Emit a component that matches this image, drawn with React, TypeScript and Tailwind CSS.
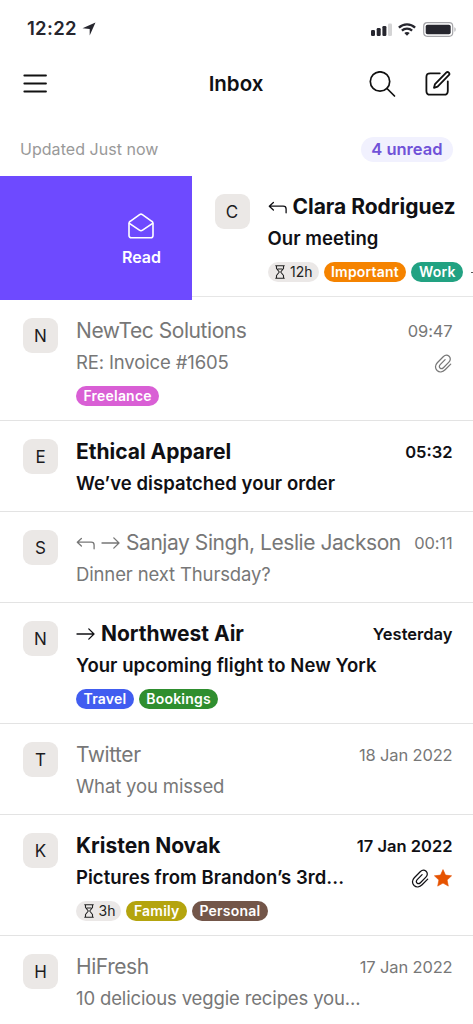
import React from "react";

type Tag = { label: string; color: string };

type Mail = {
  initial: string;
  sender: string;
  subject: string;
  date?: string;
  unread?: boolean;
  replied?: boolean;
  forwarded?: boolean;
  attachment?: boolean;
  starred?: boolean;
  expires?: string;
  tags?: Tag[];
};

const mails: Mail[] = [
  {
    initial: "N",
    sender: "NewTec Solutions",
    subject: "RE: Invoice #1605",
    date: "09:47",
    attachment: true,
    tags: [{ label: "Freelance", color: "bg-[#d95fd5]" }],
  },
  {
    initial: "E",
    sender: "Ethical Apparel",
    subject: "We’ve dispatched your order",
    date: "05:32",
    unread: true,
  },
  {
    initial: "S",
    sender: "Sanjay Singh, Leslie Jackson",
    subject: "Dinner next Thursday?",
    date: "00:11",
    replied: true,
    forwarded: true,
  },
  {
    initial: "N",
    sender: "Northwest Air",
    subject: "Your upcoming flight to New York",
    date: "Yesterday",
    unread: true,
    forwarded: true,
    tags: [
      { label: "Travel", color: "bg-[#415df0]" },
      { label: "Bookings", color: "bg-[#2f8e2f]" },
    ],
  },
  {
    initial: "T",
    sender: "Twitter",
    subject: "What you missed",
    date: "18 Jan 2022",
  },
  {
    initial: "K",
    sender: "Kristen Novak",
    subject: "Pictures from Brandon’s 3rd...",
    date: "17 Jan 2022",
    unread: true,
    attachment: true,
    starred: true,
    expires: "3h",
    tags: [
      { label: "Family", color: "bg-[#b4a40e]" },
      { label: "Personal", color: "bg-[#735649]" },
    ],
  },
  {
    initial: "H",
    sender: "HiFresh",
    subject: "10 delicious veggie recipes you...",
    date: "17 Jan 2022",
  },
];

const swipedMail: Mail = {
  initial: "C",
  sender: "Clara Rodriguez",
  subject: "Our meeting",
  unread: true,
  replied: true,
  expires: "12h",
  tags: [
    { label: "Important", color: "bg-[#f58300]" },
    { label: "Work", color: "bg-[#22a282]" },
  ],
};

function ReplyIcon() {
  return (
    <svg width="19" height="14" viewBox="0 0 19 14" fill="none" stroke="currentColor" strokeWidth="1.3" strokeLinecap="round" strokeLinejoin="round">
      <path d="M5.4 1.4 1.3 5.2l4.1 3.8M1.3 5.2h13.9c1.9 0 2.9 1 2.9 2.8v3.8" />
    </svg>
  );
}

function ForwardIcon() {
  return (
    <svg width="19" height="14" viewBox="0 0 19 14" fill="none" stroke="currentColor" strokeWidth="1.3" strokeLinecap="round" strokeLinejoin="round">
      <path d="M1 6h17M12.8.9 18 6l-5.200 5.100" />
    </svg>
  );
}

function ClipIcon() {
  return (
    <svg width="18" height="19" viewBox="0 0 18 19" fill="none" stroke="currentColor" strokeWidth="1.25" strokeLinecap="round" strokeLinejoin="round">
      <path d="M16.7 10.1l-5.6 5.7c-2.4 2.4-5.7 2.8-8 .7-2.3-2.2-2.1-5.4.2-7.8l5.9-6c1.7-1.7 4.2-2 5.9-.4 1.7 1.6 1.5 4.1-.2 5.8l-5.5 5.6c-1 1-2.4 1.2-3.4.3-.9-1-.8-2.3.2-3.400l4.900-5" />
    </svg>
  );
}

function StarIcon() {
  return (
    <svg width="18" height="18" viewBox="0 0 18 18" fill="#e65300">
      <path d="M9 .6l2.500 5.500 6.100.7-4.500 4.200 1.200 6.100L9 14.100l-5.300 3 1.200-6.100L.4 6.800l6.100-.7z" stroke="#e65300" strokeWidth=".6" strokeLinejoin="round" />
    </svg>
  );
}

function HourglassIcon() {
  return (
    <svg width="10" height="14" viewBox="0 0 10 14" fill="none" stroke="#222" strokeWidth="1.1" strokeLinejoin="round">
      <path d="M.3.8h9.400M.3 13.200h9.400M1.500.8v2.700L4.300 7l-2.800 3.500v2.700M8.500.8v2.700L5.700 7l2.800 3.500v2.700M2.600 4h4.800" />
    </svg>
  );
}

function MailContent({ mail }: { mail: Mail }) {
  const tone = mail.unread ? "text-[#101014]" : "text-[#777]";
  return (
    <>
      <div className="mt-[18px] w-[35px] h-[35px] shrink-0 rounded-[9px] bg-[#ebe8e6] text-[#1c1c1e] text-[17px] leading-[36px] text-center">
        {mail.initial}
      </div>
      <div className={`ml-[18px] mt-[18px] flex-1 min-w-0 whitespace-nowrap ${tone}`}>
        <div className="flex items-center h-[26px]">
          {mail.replied && <span className="mr-[6px] mt-px"><ReplyIcon /></span>}
          {mail.forwarded && <span className="mr-[6px] mt-px"><ForwardIcon /></span>}
          <span
            className={
              mail.unread
                ? "text-[21px] font-bold tracking-[-0.02px]"
                : "text-[21px] tracking-[-0.44px]"
            }
          >
            {mail.sender}
          </span>
          {mail.date && (
            <span
              className={`ml-auto ${
                mail.unread ? "text-[16.5px] font-semibold" : "text-[16.5px] tracking-[-0.15px]"
              }`}
            >
              {mail.date}
            </span>
          )}
        </div>
        <div className="flex items-center h-[26px] mt-[6px]">
          <span
            className={
              mail.unread
                ? "text-[18.5px] font-semibold tracking-[0.05px]"
                : "text-[18.5px] tracking-[-0.14px]"
            }
          >
            {mail.subject}
          </span>
          <span className="ml-auto mr-px flex items-center gap-[5px]">
            {mail.attachment && <ClipIcon />}
            {mail.starred && <StarIcon />}
          </span>
        </div>
        {mail.tags && (
          <div className="flex gap-[5px] mt-[10px] h-5 text-sm leading-5">
            {mail.expires && (
              <span className="rounded-full bg-[#ebe8e7] text-[#222] pl-[7.5px] pr-[6px] flex items-center gap-[5px]">
                <HourglassIcon />
                {mail.expires}
              </span>
            )}
            {mail.tags.map((tag) => (
              <span
                key={tag.label}
                className={`rounded-full px-[7.5px] text-white font-semibold tracking-[0.2px] ${tag.color}`}
              >
                {tag.label}
              </span>
            ))}
          </div>
        )}
      </div>
    </>
  );
}

function MailRow({ mail }: { mail: Mail }) {
  return (
    <div
      className={`flex shrink-0 pl-[23px] pr-[20.5px] border-b border-[#e3e3e3] ${
        mail.tags ? "h-[121px]" : "h-[91px]"
      }`}
    >
      <MailContent mail={mail} />
    </div>
  );
}

function SwipedRow({ mail }: { mail: Mail }) {
  return (
    <div className="flex h-[124px] shrink-0 overflow-hidden">
      <div className="w-[192px] shrink-0 bg-[#6e4aff] text-white flex flex-col items-end pr-[31px]">
        <div className="flex flex-col items-center pt-[37px]">
          <svg width="26" height="26" viewBox="0 0 26 26" fill="none" stroke="white" strokeWidth="1.6" strokeLinejoin="round" strokeLinecap="round">
            <path d="M1 10.400c0-.9.400-1.600 1.200-2.100L11.600 1.600c.9-.6 1.900-.6 2.800 0l9.400 6.700c.8.500 1.200 1.200 1.200 2.100v12c0 1.400-.9 2.300-2.300 2.300H3.300C1.900 24.700 1 23.800 1 22.400z" />
            <path d="M1.400 10.300l10 6.900c1 .7 2.200.7 3.200 0l10-6.900" />
          </svg>
          <span className="mt-[6px] text-base font-semibold leading-6">Read</span>
        </div>
      </div>
      <div className="flex flex-1 min-w-0 h-[121px] border-b border-[#e6e6e6] pl-[22.5px] relative">
        <MailContent mail={mail} />
        <span className="absolute right-0 top-[96px] w-[2px] h-px bg-[#555]" />
      </div>
    </div>
  );
}

function StatusBar() {
  return (
    <div className="h-[56px] shrink-0 pl-[27px] pr-4 pt-[2px] flex items-center text-[#26262e]">
      <span className="text-[18.5px] font-semibold tracking-[0.3px]">12:22</span>
      <svg width="14" height="14" viewBox="0 0 14 14" className="ml-[5px]" fill="currentColor">
        <path d="M13.5.5 7.700 13.500V6.900L.5 6.300z" />
      </svg>
      <svg width="21" height="13" viewBox="0 0 21 13" className="ml-auto" fill="currentColor">
        <rect x="0" y="7" width="4" height="6" rx="1.2" />
        <rect x="5.7" y="5" width="4" height="8" rx="1.2" />
        <rect x="11.4" y="3" width="4" height="10" rx="1.2" />
        <rect x="17" y="0.5" width="4" height="12.5" rx="1.2" opacity=".2" />
      </svg>
      <svg width="18" height="13" viewBox="0 0 18 13" className="ml-[6px]" fill="none" stroke="currentColor" strokeWidth="2.3">
        <path d="M.9 4.600c4.500-4.300 11.700-4.300 16.200 0M3.900 7.600c2.800-2.700 7.400-2.700 10.200 0" />
        <path d="M6.300 10c1.500-1.400 3.900-1.400 5.400 0L9 12.800z" fill="currentColor" stroke="none" />
      </svg>
      <svg width="34" height="15" viewBox="0 0 34 15" className="ml-[7px]" fill="none">
        <rect x=".7" y=".7" width="29" height="13.6" rx="3.5" stroke="#a6a6aa" strokeWidth="1.2" />
        <rect x="2.7" y="2.7" width="25" height="9.6" rx="1.8" fill="#26262e" />
        <path d="M31.500 5.200c1.400.5 1.400 4.100 0 4.600z" fill="#a6a6aa" />
      </svg>
    </div>
  );
}

function Header() {
  return (
    <div className="h-[56px] shrink-0 flex items-center justify-between pl-[23px] pr-[22px]">
      <div className="flex-1">
        <svg width="24" height="20" viewBox="0 0 24 20" stroke="#111" strokeWidth="1.8" strokeLinecap="round">
          <path d="M1.300 1.500h21.700M1.300 9.500h21.700M1.300 17.500h21.700" />
        </svg>
      </div>
      <h1 className="text-[20.5px] leading-6 pb-px pr-[2px] font-semibold text-[#101014]">Inbox</h1>
      <div className="flex flex-1 justify-end items-center gap-[29px]">
        <svg width="27" height="27" viewBox="0 0 27 27" fill="none" stroke="#111" strokeWidth="1.7" strokeLinecap="round">
          <circle cx="11" cy="10.5" r="9.7" />
          <path d="M18 17.500l7.500 7.500" />
        </svg>
        <svg width="26" height="26" viewBox="0 0 26 26" fill="none" stroke="#111" strokeWidth="1.8" strokeLinecap="round" strokeLinejoin="round">
          <path d="M14.800 2.300H5.200C2.600 2.300 1.400 3.500 1.400 6.100v13.800c0 2.600 1.200 3.800 3.800 3.800H19c2.600 0 3.800-1.200 3.800-3.800V10.300" />
          <path d="M9 16.800l1-3.700L21.200 1.700c.8-.8 1.800-.8 2.600 0 .8.800.8 1.700 0 2.500L12.600 15.600z" />
        </svg>
      </div>
    </div>
  );
}

export default function App() {
  return (
    <div className="w-[473px] h-[1024px] overflow-hidden bg-white flex flex-col font-['Inter',sans-serif]">
      <StatusBar />
      <Header />
      <div className="h-16 shrink-0 flex items-center pl-5 pr-[20.5px] pt-[10px]">
        <span className="text-[16px] tracking-[0.04px] text-[#999]">Updated Just now</span>
        <span className="ml-auto h-[25px] px-[10px] rounded-full bg-[#f1f1fe] text-[#7052d8] text-[16.5px] font-semibold leading-[25px]">
          4 unread
        </span>
      </div>
      <SwipedRow mail={swipedMail} />
      {mails.map((mail) => (
        <MailRow key={mail.sender} mail={mail} />
      ))}
    </div>
  );
}
